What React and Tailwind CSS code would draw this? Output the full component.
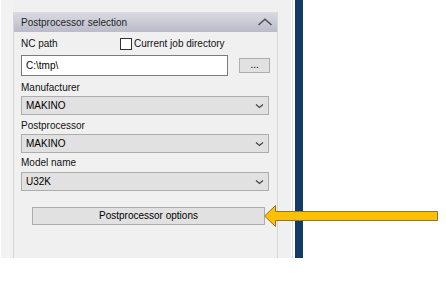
import React from "react";

const Chevron = () => (
  <svg width="9" height="6" viewBox="0 0 9 6" className="shrink-0">
    <polyline points="1,1.5 4.5,4.5 8,1.5" fill="none" stroke="#444" strokeWidth="1.2" />
  </svg>
);

const Select = ({ value }) => (
  <div className="flex items-center justify-between w-[248px] h-[19px] bg-[#e1e1e1] border border-[#adadad] pl-[4px] pr-[4px]">
    <span className="text-[10px] leading-none text-black">{value}</span>
    <Chevron />
  </div>
);

const Label = ({ children, className }) => (
  <div className={`text-[10px] leading-[12px] text-[#111] ${className}`}>{children}</div>
);

const App = () => {
  return (
    <div className="relative w-[446px] h-[283px] bg-white font-['Liberation_Sans',Arial,sans-serif] overflow-hidden">
      <div className="flex h-[258px]">
        <div className="w-px bg-white" />
        <div className="w-[12px] bg-[#f2f2f2]" />

        {/* Panel */}
        <div className="w-[265px] bg-[#f0f0f0] pt-[12px]">
          <div className="h-full border-l border-r border-[#d6d6d6] flex flex-col">
            <div className="h-[20px] flex items-center justify-between pl-[7px] pr-[4px] bg-gradient-to-b from-[#dadbe3] to-[#b9bbc9]">
              <span className="text-[10px] text-[#1e1e1e]">Postprocessor selection</span>
              <svg width="16" height="8" viewBox="0 0 16 8">
                <polyline points="1.5,7 8,1.2 14.5,7" fill="none" stroke="#505050" strokeWidth="1.6" />
              </svg>
            </div>

            <div className="px-[7px] flex flex-col">
              <div className="flex items-center h-[13px] mt-[5px]">
                <Label className="w-[99px]">NC path</Label>
                <div className="w-[12px] h-[12px] border border-[#333] bg-white" />
                <Label className="ml-[2px]">Current job directory</Label>
              </div>

              <div className="flex items-center mt-[5px]">
                <div className="w-[209px] h-[21px] bg-white border border-[#7a7a7a] flex items-center pl-[4px]">
                  <span className="text-[10px] leading-none text-black">C:\tmp\</span>
                </div>
                <div className="ml-[11px] w-[31px] h-[15px] bg-[#e1e1e1] border border-[#adadad] flex items-center justify-center">
                  <span className="text-[10px] leading-none text-black -mt-[2px]">...</span>
                </div>
              </div>

              <Label className="mt-[6px]">Manufacturer</Label>
              <div className="mt-[2px]">
                <Select value="MAKINO" />
              </div>

              <Label className="mt-[5px]">Postprocessor</Label>
              <div className="mt-[2px]">
                <Select value="MAKINO" />
              </div>

              <Label className="mt-[4px]">Model name</Label>
              <div className="mt-[3px]">
                <Select value="U32K" />
              </div>

              <div className="mt-[16px] ml-[11px] w-[233px] h-[18px] bg-[#e1e1e1] border border-[#adadad] flex items-center justify-center">
                <span className="text-[10px] leading-none text-black">Postprocessor options</span>
              </div>
            </div>
          </div>
        </div>

        <div className="w-[13px] bg-[#f0f0f0]" />
        <div className="w-px bg-white" />
        <div className="w-px bg-[#dcdcdc]" />
        <div className="w-[2px] bg-white" />
        <div className="w-[8px] bg-[#133b6a]" />
        <div className="flex-1 bg-white" />
      </div>

      {/* Callout arrow */}
      <svg className="absolute left-0 top-0" width="446" height="283" viewBox="0 0 446 283">
        <polygon
          points="264.5,216 275.5,205.5 275.5,211.5 437.5,211.5 437.5,220.5 275.5,220.5 275.5,226.5"
          fill="#ffc000"
          stroke="#8c7434"
          strokeWidth="1"
        />
      </svg>
    </div>
  );
};

export default App;
